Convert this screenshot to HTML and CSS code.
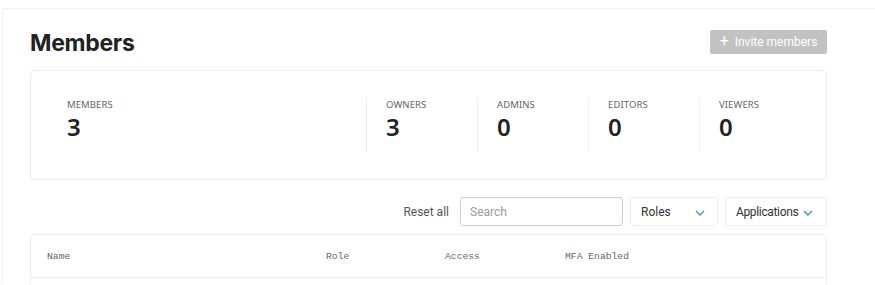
FILE: index.html
```html
<!DOCTYPE html>
<html>
<head>
<meta charset="utf-8">
<link rel="stylesheet" href="styles.css">
</head>
<body>
<div class="frame">
  <div class="header">
    <h1 class="title">Members</h1>
    <button class="invite"><span class="plus">+</span>Invite members</button>
  </div>
  <div class="stats card">
    <div class="stat first">
      <div class="stat-label">MEMBERS</div>
      <div class="stat-value">3</div>
    </div>
    <div class="stat">
      <div class="stat-label">OWNERS</div>
      <div class="stat-value">3</div>
    </div>
    <div class="stat">
      <div class="stat-label">ADMINS</div>
      <div class="stat-value">0</div>
    </div>
    <div class="stat">
      <div class="stat-label">EDITORS</div>
      <div class="stat-value">0</div>
    </div>
    <div class="stat">
      <div class="stat-label">VIEWERS</div>
      <div class="stat-value">0</div>
    </div>
  </div>
  <div class="filters">
    <span class="reset">Reset all</span>
    <input class="search" type="text" placeholder="Search">
    <div class="select roles"><span>Roles</span><svg class="chev" width="10" height="6" viewBox="0 0 10 6"><path d="M1 1l4 4 4-4" fill="none" stroke="#3d97ad" stroke-width="1.4"/></svg></div>
    <div class="select apps"><span class="apps-label">Applications</span><svg class="chev" width="10" height="6" viewBox="0 0 10 6"><path d="M1 1l4 4 4-4" fill="none" stroke="#3d97ad" stroke-width="1.4"/></svg></div>
  </div>
  <div class="table card">
    <div class="thead">
      <div>Name</div>
      <div>Role</div>
      <div>Access</div>
      <div>MFA Enabled</div>
    </div>
  </div>
</div>
</body>
</html>
```
FILE: styles.css
```css
html, body {
  margin: 0;
  padding: 0;
  background: #fff;
  height: 100%;
  overflow: hidden;
}
body {
  font-family: "Roboto", "Noto Sans", sans-serif;
  color: #222;
}
.frame {
  margin: 8px 0 0 2px;
  border-top: 1px solid #f1f1f1;
  border-left: 1px solid #f1f1f1;
  padding: 0 48px 0 27px;
  height: 276px;
  box-sizing: border-box;
  overflow: hidden;
}
.header {
  display: flex;
  align-items: center;
  justify-content: space-between;
  margin-top: 21px;
  height: 24px;
}
.title {
  margin: 0;
  font-family: "Inter", "Open Sans", sans-serif;
  font-weight: 700;
  font-size: 23px;
  letter-spacing: -0.3px;
  color: #222;
  line-height: 24px;
  padding-top: 1px;
}
.invite {
  width: 117px;
  height: 24px;
  border: 0;
  border-radius: 2px;
  background: #c2c2c2;
  color: #fff;
  font-family: "Roboto", "Noto Sans", sans-serif;
  font-size: 12px;
  padding: 0;
  display: flex;
  align-items: center;
  justify-content: center;
}
.plus {
  font-size: 16px;
  line-height: 1;
  margin-right: 6px;
  margin-top: -2px;
}
.card {
  border: 1px solid #efefef;
  border-radius: 4px;
  background: #fff;
}
.stats {
  margin-top: 16px;
  height: 110px;
  box-sizing: border-box;
  display: flex;
  padding: 27px 16px 0 36px;
}
.stat {
  width: 111px;
  height: 54px;
  box-sizing: border-box;
  border-left: 1px solid #eeeeee;
  padding-left: 19px;
}
.stat.first {
  flex: 1;
  border-left: 0;
  padding-left: 0;
}
.stat-label {
  font-family: "Noto Sans", sans-serif;
  font-size: 9.5px;
  color: #666;
  letter-spacing: 0.1px;
  line-height: 12px;
  margin-top: 1px;
}
.stat-value {
  font-family: "Noto Sans", sans-serif;
  font-size: 24px;
  font-weight: 600;
  color: #222;
  line-height: 28px;
  margin-top: 2px;
}
.filters {
  margin-top: 17px;
  display: flex;
  justify-content: flex-end;
  align-items: center;
  height: 29px;
  gap: 7px;
}
.reset {
  font-size: 12px;
  color: #555;
  margin-right: 4px;
}
.search {
  width: 163px;
  height: 29px;
  box-sizing: border-box;
  border: 1px solid #cfcfcf;
  border-radius: 3px;
  padding: 0 9px;
  font-family: "Roboto", "Noto Sans", sans-serif;
  font-size: 12px;
  outline: none;
}
.search::placeholder {
  color: #9a9a9a;
}
.select {
  height: 29px;
  box-sizing: border-box;
  border: 1px solid #efefef;
  border-radius: 3px;
  display: flex;
  align-items: center;
  justify-content: space-between;
  padding: 0 12px 0 10px;
  font-size: 12px;
  color: #333;
}
.roles {
  width: 88px;
}
.apps {
  width: 102px;
  padding-right: 13px;
}
.apps-label {
  letter-spacing: -0.35px;
}
.chev {
  margin-top: 2px;
}
.table {
  margin-top: 8px;
  height: 200px;
}
.thead {
  display: grid;
  grid-template-columns: 279px 119px 120px 1fr;
  height: 43px;
  box-sizing: border-box;
  align-items: center;
  padding-left: 16px;
  border-bottom: 1px solid #efefef;
  font-family: "Liberation Mono", "DejaVu Sans Mono", monospace;
  font-size: 9.7px;
  color: #666;
}
```
